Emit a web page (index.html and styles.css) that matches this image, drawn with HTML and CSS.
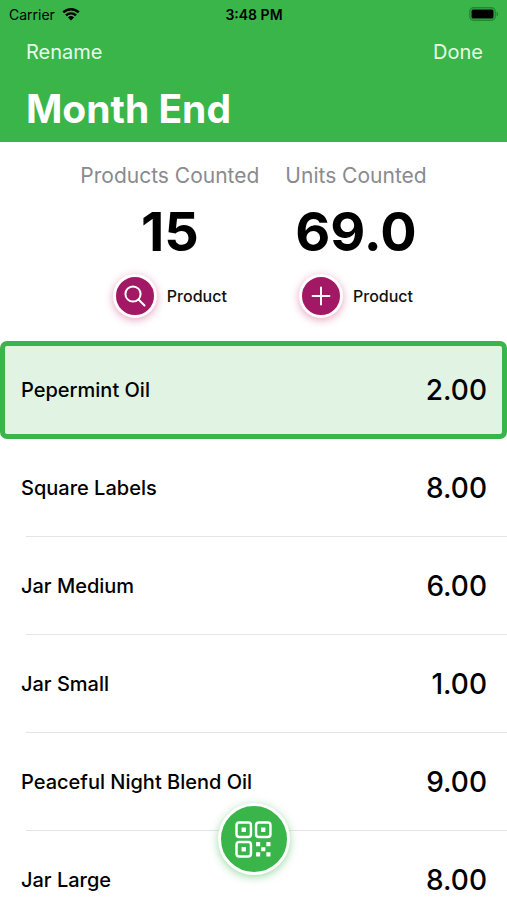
FILE: index.html
```
<!DOCTYPE html>
<html lang="en">
<head>
    <meta charset="UTF-8">
    <meta name="viewport" content="width=device-width, initial-scale=1.0">
    <title>Month End</title>
    <link rel="stylesheet" href="styles.css">
</head>
<body>
    <div class="app">
        <header class="header">
            <div class="status-bar">
                <div class="carrier">
                    <span>Carrier</span>
                    <svg class="wifi" viewBox="0 0 18 14" aria-hidden="true">
                        <path d="M1.2 5.4a11.2 11.2 0 0 1 15.6 0M4 8.4a7.2 7.2 0 0 1 10 0" fill="none" stroke="#000" stroke-width="2.4"/>
                        <path d="M9 13.6L5.9 10.5a4.5 4.5 0 0 1 6.2 0z"/>
                    </svg>
                </div>
                <span class="time">3:48 PM</span>
                <div class="battery">
                    <svg viewBox="0 0 30 14" aria-hidden="true">
                        <rect x="0.8" y="0.8" width="25.4" height="12.4" rx="4" fill="none" stroke="#26862f" stroke-width="1.4"/>
                        <rect x="2.5" y="2.5" width="22" height="9" rx="1.5"/>
                        <path d="M27.6 4.6a2.6 2.6 0 0 1 0 4.8z" fill="#26862f"/>
                    </svg>
                </div>
            </div>
            <nav class="nav">
                <button type="button" class="nav-button">Rename</button>
                <button type="button" class="nav-button">Done</button>
            </nav>
            <h1>Month End</h1>
        </header>

        <section class="summary">
            <div class="stat">
                <h2>Products Counted</h2>
                <p class="total">15</p>
                <button type="button" class="action">
                    <span class="circle">
                        <svg viewBox="0 0 24 24" aria-hidden="true">
                            <circle cx="10" cy="10" r="7.6"/>
                            <path d="M15.5 15.5l6 6"/>
                        </svg>
                    </span>
                    Product
                </button>
            </div>
            <div class="stat">
                <h2>Units Counted</h2>
                <p class="total">69.0</p>
                <button type="button" class="action">
                    <span class="circle">
                        <svg viewBox="0 0 24 24" aria-hidden="true">
                            <path d="M12 3.6v16.8M3.6 12h16.8"/>
                        </svg>
                    </span>
                    Product
                </button>
            </div>
        </section>

        <ul class="items">
            <li class="item selected"><span>Pepermint Oil</span><span class="count">2.00</span></li>
            <li class="item"><span>Square Labels</span><span class="count">8.00</span></li>
            <li class="item"><span>Jar Medium</span><span class="count">6.00</span></li>
            <li class="item"><span>Jar Small</span><span class="count">1.00</span></li>
            <li class="item"><span>Peaceful Night Blend Oil</span><span class="count">9.00</span></li>
            <li class="item"><span>Jar Large</span><span class="count">8.00</span></li>
        </ul>

        <button type="button" class="scan" aria-label="Scan code">
            <svg viewBox="0 0 36 36" aria-hidden="true">
                <g fill="none" stroke="#fff" stroke-width="2.4">
                    <rect x="1.5" y="1.5" width="14" height="14" rx="2.6"/>
                    <rect x="20.5" y="1.5" width="14" height="14" rx="2.6"/>
                    <rect x="1.5" y="20.5" width="14" height="14" rx="2.6"/>
                </g>
                <path fill="#fff" d="M6.4 6.4h4.2v4.2H6.4zM25.4 6.4h4.2v4.2h-4.2zM6.4 25.4h4.2v4.2H6.4zM20.5 20.5h4v4h-4zM30.5 20.5h4v4h-4zM25.5 25.5h4v4h-4zM20.5 30.5h4v4h-4zM30.5 30.5h4v4h-4z"/>
            </svg>
        </button>
    </div>
</body>
</html>
```
FILE: styles.css
```
* {
    box-sizing: border-box;
}
body {
    font-family: Inter, "Liberation Sans", sans-serif;
    margin: 0;
    background-color: #fff;
    color: #000;
}
h1, h2, p, ul {
    margin: 0;
    padding: 0;
}
button {
    font-family: inherit;
    border: none;
    background: none;
    padding: 0;
    cursor: pointer;
}
.app {
    display: flex;
    flex-direction: column;
    height: 100vh;
}

/* Header */
.header {
    flex: none;
    background-color: #39b54a;
    padding-bottom: 8px;
}
.status-bar {
    display: grid;
    grid-template-columns: 1fr auto 1fr;
    align-items: center;
    height: 28px;
    padding: 0 8px 0 9px;
    font-size: 14px;
}
.carrier {
    display: flex;
    align-items: center;
    gap: 7px;
}
.wifi {
    width: 18px;
    height: 14px;
}
.time {
    font-weight: 600;
}
.battery {
    display: flex;
    justify-content: flex-end;
}
.battery svg {
    width: 30px;
    height: 14px;
}
.nav {
    display: flex;
    justify-content: space-between;
    padding: 12px 24px 12px 26px;
}
.nav-button {
    font-size: 20px;
    line-height: 24px;
    color: #e8fbe9;
}
h1 {
    padding: 8px 26px 0;
    font-size: 39px;
    line-height: 50px;
    font-weight: 700;
    color: #fff;
}

/* Totals */
.summary {
    flex: none;
    display: flex;
    justify-content: center;
    gap: 26px;
    padding: 20px 16px 23px;
}
.stat {
    display: flex;
    flex-direction: column;
    align-items: center;
}
h2 {
    font-size: 21px;
    line-height: 28px;
    font-weight: 400;
    color: #8a8a8e;
}
.total {
    margin: 9px 0;
    font-size: 54px;
    line-height: 66px;
    font-weight: 700;
}
.action {
    display: flex;
    align-items: center;
    gap: 10px;
    font-size: 16px;
    font-weight: 500;
    color: #111;
}
.circle {
    display: flex;
    align-items: center;
    justify-content: center;
    width: 44px;
    height: 44px;
    border: 3px solid #fff;
    border-radius: 50%;
    background-color: #a31865;
    box-shadow: 0 2px 8px rgba(190, 25, 100, 0.4);
}
.circle svg {
    width: 24px;
    height: 24px;
    fill: none;
    stroke: #fff;
    stroke-width: 2;
    stroke-linecap: round;
}

/* Product list */
.items {
    flex: 1;
    min-height: 0;
    overflow-y: auto;
    scrollbar-width: none;
    list-style: none;
}
.item {
    display: flex;
    align-items: center;
    justify-content: space-between;
    height: 98px;
    padding: 0 20px 0 21px;
    font-size: 20px;
    font-weight: 500;
    background: linear-gradient(#e4e4e6, #e4e4e6) 26px 100% / 100% 1px no-repeat;
}
.item.selected {
    padding: 0 15px 0 16px;
    border: 5px solid #39b54a;
    border-radius: 7px;
    background: #e1f4e4;
}
.count {
    font-size: 28px;
}

/* Floating scan button */
.scan {
    position: fixed;
    left: 50%;
    bottom: 25px;
    transform: translateX(-50%);
    display: flex;
    align-items: center;
    justify-content: center;
    width: 72px;
    height: 72px;
    border: 3px solid #fff;
    border-radius: 50%;
    background-color: #39b54a;
    box-shadow: 0 2px 9px rgba(57, 181, 74, 0.5);
}
.scan svg {
    width: 37px;
    height: 37px;
}
```
